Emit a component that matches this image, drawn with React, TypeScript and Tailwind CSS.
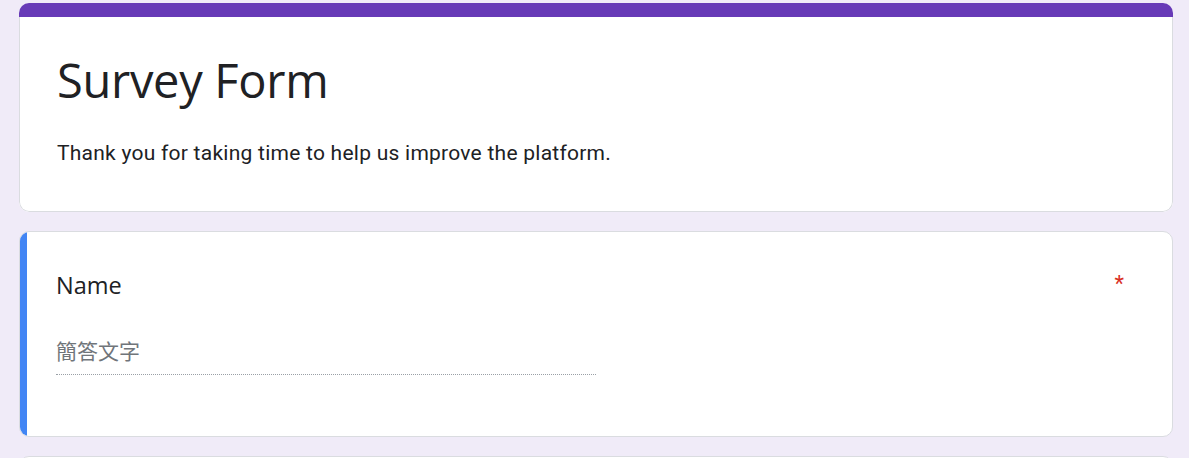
export default function App() {
  return (
    <div className="min-h-[458px] h-[458px] overflow-hidden bg-[#f0ebf8] pl-[19px] pr-[16px] pt-[3px]" style={{ fontFamily: "Roboto, 'Noto Sans CJK TC', sans-serif" }}>
      <div className="flex flex-col gap-[19px]">
        {/* Header card */}
        <div className="rounded-[10px] overflow-hidden bg-white">
          <div className="h-[14px] bg-[#673ab7]" />
          <div className="border-x border-b border-[#dadce0] rounded-b-[10px] px-[37px] pt-[31px] pb-[44px]">
            <h1 className="text-[47px] leading-[64px] text-[#202124] tracking-[-0.3px]" style={{ fontFamily: "'Open Sans', Roboto, sans-serif" }}>Survey Form</h1>
            <p className="mt-[27px] text-[21px] leading-[28px] tracking-[0.25px] text-[#202124]">Thank you for taking time to help us improve the platform.</p>
          </div>
        </div>

        {/* Question card */}
        <div className="flex rounded-[10px] overflow-hidden bg-white border border-[#dadce0] h-[206px]">
          <div className="w-[8px] bg-[#4285f4] -my-px -ml-px" />
          <div className="flex-1 pl-[29px] pr-[48px] pt-[37px]">
            <div className="flex justify-between items-start">
              <div className="text-[23.5px] leading-[32px] text-[#202124]" style={{ fontFamily: "'Open Sans', Roboto, sans-serif" }}>Name</div>
              <div className="text-[22px] leading-[28px] text-[#d93025] pt-[1px]">*</div>
            </div>
            <div className="mt-[33px] w-[540px] border-b border-dotted border-[#9aa0a6] pb-[8px]">
              <div className="text-[21px] leading-[32px] text-[#70757a]" style={{ fontFamily: "'Noto Sans CJK TC', sans-serif" }}>簡答文字</div>
            </div>
          </div>
        </div>

        {/* Next card (partially visible) */}
        <div className="rounded-[10px] bg-white border border-[#dadce0] h-[100px]" />
      </div>
    </div>
  );
}
